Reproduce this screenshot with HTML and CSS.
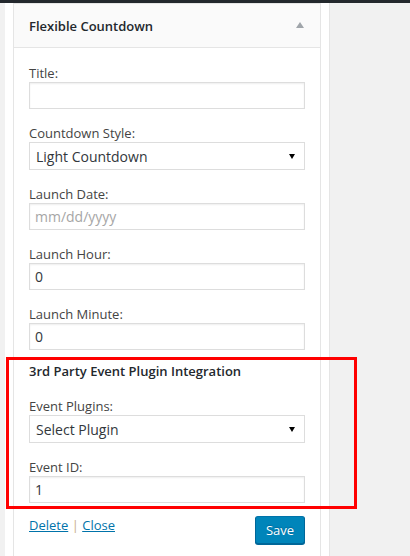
FILE: index.html
```html
<!DOCTYPE html>
<html lang="en">
<head>
<meta charset="utf-8">
<title>Flexible Countdown widget</title>
<link rel="stylesheet" href="styles.css">
</head>
<body>
<div class="topbar"></div>
<div class="page">
  <div class="sidebar">
    <div class="widget">
      <div class="widget-top">
        <h3 class="widget-title">Flexible Countdown</h3>
        <svg class="toggle" width="8" height="6" viewBox="0 0 8 6"><path d="M4 0 L8 6 L0 6 Z" fill="#a0a5aa"/></svg>
      </div>
      <div class="widget-inside">
        <div class="field">
          <label class="label">Title:</label>
          <input class="input" type="text" value="">
        </div>
        <div class="field">
          <label class="label">Countdown Style:</label>
          <select class="input select"><option>Light Countdown</option></select>
        </div>
        <div class="field">
          <label class="label">Launch Date:</label>
          <input class="input" type="text" placeholder="mm/dd/yyyy">
        </div>
        <div class="field">
          <label class="label">Launch Hour:</label>
          <input class="input" type="text" value="0">
        </div>
        <div class="field">
          <label class="label">Launch Minute:</label>
          <input class="input" type="text" value="0">
        </div>
        <h4 class="section-title">3rd Party Event Plugin Integration</h4>
        <div class="field">
          <label class="label">Event Plugins:</label>
          <select class="input select"><option>Select Plugin</option></select>
        </div>
        <div class="field">
          <label class="label">Event ID:</label>
          <input class="input" type="text" value="1">
        </div>
        <div class="actions">
          <div class="links"><a href="#" class="link">Delete</a> <span class="sep">|</span> <a href="#" class="link">Close</a></div>
          <button class="save" type="button">Save</button>
        </div>
      </div>
    </div>
  </div>
</div>
<div class="highlight"></div>
</body>
</html>
```

FILE: styles.css
```css
body {
  margin: 0;
  background: #f1f1f1;
  font-family: "Open Sans", "Liberation Sans", sans-serif;
  font-size: 13px;
  color: #444;
}
.topbar {
  height: 3px;
  background: #23282d;
}
.page {
  display: flex;
  padding-left: 5px;
}
.sidebar {
  width: 325px;
  box-sizing: border-box;
  background: #fff;
  border-right: 1px solid #e5e5e5;
  padding-left: 8px;
  min-height: 553px;
}
.widget {
  width: 308px;
  box-sizing: border-box;
  border: 1px solid #e5e5e5;
  border-bottom: none;
  min-height: 553px;
  background: #fff;
}
.widget-top {
  height: 43px;
  background: #fafafa;
  border-bottom: 1px solid #e5e5e5;
  display: flex;
  align-items: center;
  justify-content: space-between;
  padding: 0 16px 0 15px;
}
.widget-title {
  margin: 0;
  font-size: 13px;
  font-weight: 600;
  line-height: 18px;
  color: #23282d;
}
.toggle {
  display: block;
  margin-top: -1px;
}
.widget-inside {
  padding: 16px 15px 15px;
}
.field + .field {
  margin-top: 15px;
}
.label {
  display: block;
  line-height: 18px;
}
.input {
  display: block;
  width: 100%;
  box-sizing: border-box;
  height: 27px;
  margin: 0;
  padding: 0 5px;
  border: 1px solid #ddd;
  border-radius: 0;
  box-shadow: inset 0 1px 2px rgba(0, 0, 0, 0.07);
  background: #fff;
  font-family: "Open Sans", "Liberation Sans", sans-serif;
  font-size: 14px;
  color: #32373c;
  outline: none;
}
.input::placeholder {
  color: #a6a6a6;
}
.select {
  height: 28px;
  padding-left: 6px;
  appearance: none;
  -webkit-appearance: none;
  box-shadow: none;
  background: #fff url("data:image/svg+xml,%3Csvg xmlns='http://www.w3.org/2000/svg' width='6' height='5' viewBox='0 0 6 5'%3E%3Cpath d='M0 0H6L3 5Z' fill='%23000'/%3E%3C/svg%3E") no-repeat right 9px center;
}
.section-title {
  margin: 12px 0 17px;
  font-size: 13px;
  font-weight: 600;
  line-height: 18px;
  color: #23282d;
}
.actions {
  display: flex;
  justify-content: space-between;
  align-items: flex-start;
  margin-top: 13px;
}
.links {
  line-height: 18px;
  font-size: 13px;
}
.link {
  color: #0073aa;
  text-decoration: underline;
}
.sep {
  color: #c9ad82;
}
.save {
  width: 50px;
  height: 28px;
  padding: 0 9px;
  margin: 0;
  border: 1px solid #0073aa;
  border-color: #0073aa #006799 #006799;
  border-radius: 3px;
  background: #0085ba;
  box-shadow: 0 1px 0 #006799;
  color: #fff;
  font-family: "Open Sans", "Liberation Sans", sans-serif;
  font-size: 13px;
  text-shadow: 0 -1px 1px #006799;
}
.highlight {
  position: absolute;
  left: 6px;
  top: 357px;
  width: 351px;
  height: 152px;
  box-sizing: border-box;
  border: 3px solid #ff0000;
  pointer-events: none;
}
```
